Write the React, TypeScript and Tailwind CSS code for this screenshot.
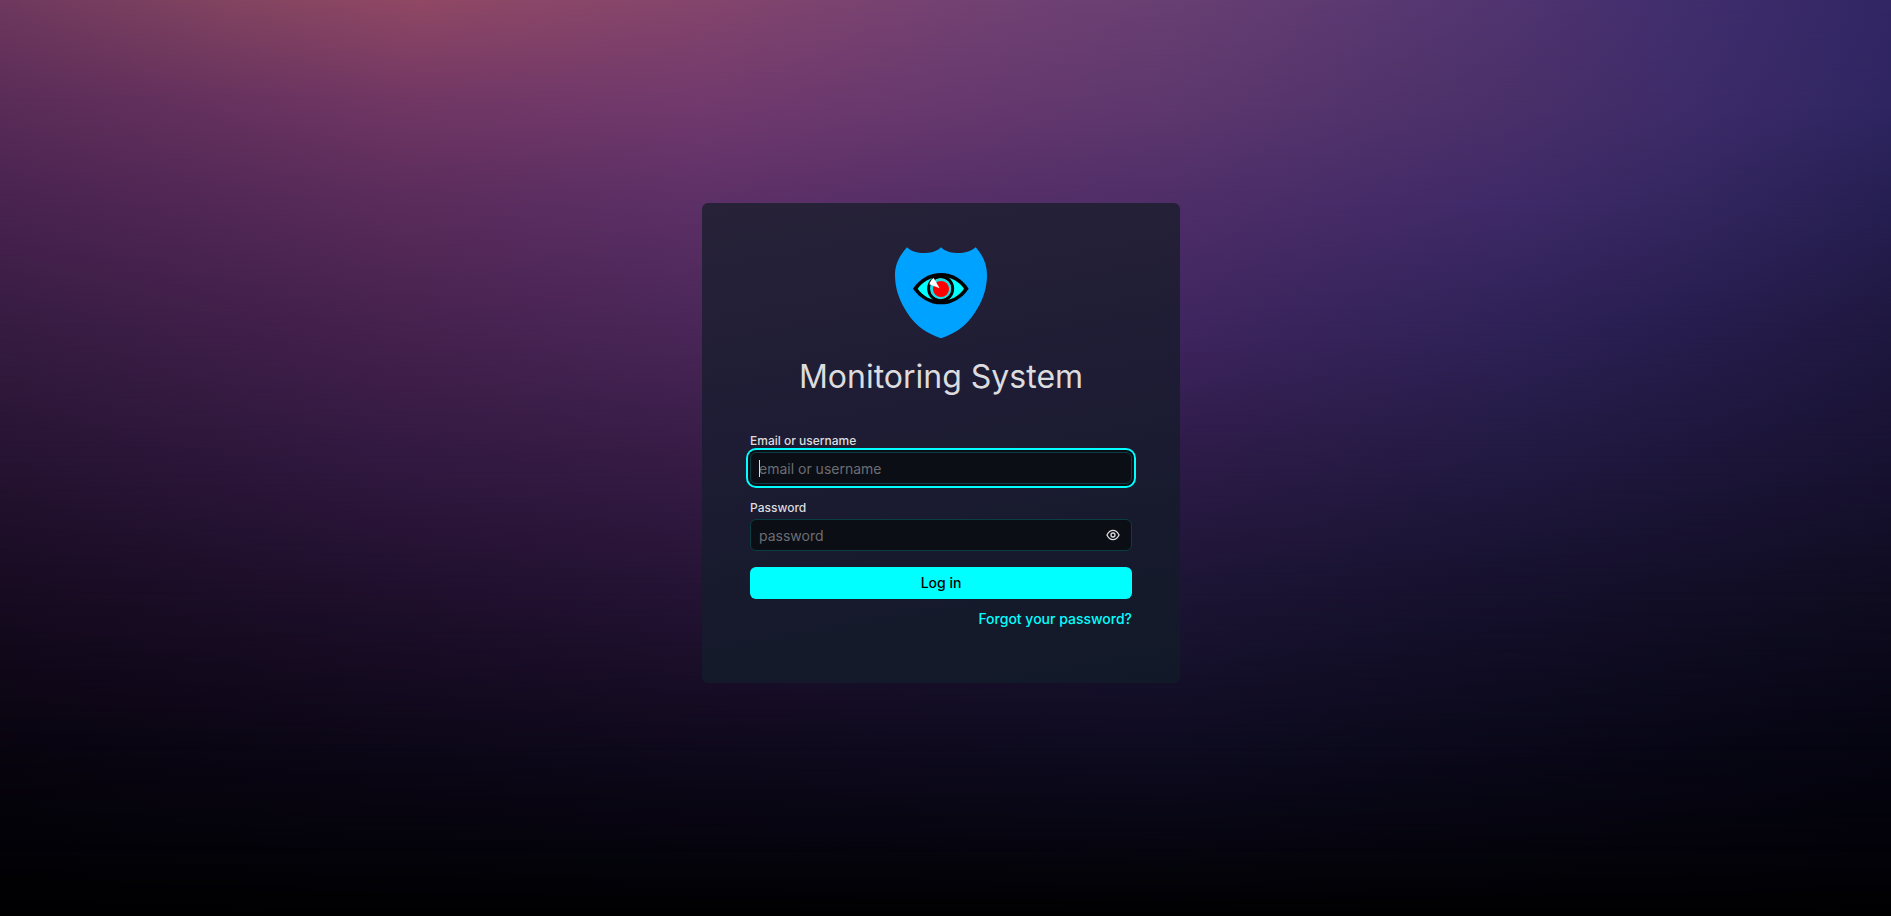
import React from 'react';

const backdropLayers = [
  'bg-[#010102]',
  'bg-[linear-gradient(to_right,#020207,#04030a_21%,#05040d_37%,#06050f_62%,#030209)] [mask-image:linear-gradient(to_bottom,black_93%,transparent_100%)]',
  'bg-[linear-gradient(to_right,#08040f,#0c0717_21%,#0f091c_37%,#0e0b20_62%,#0a0819_80%,#050410)] [mask-image:linear-gradient(to_bottom,black_82%,transparent_93%)]',
  'bg-[linear-gradient(to_right,#170b21,#1f0f2c_21%,#241334_37%,#1c1534_62%,#15102c_80%,#0f0c20)] [mask-image:linear-gradient(to_bottom,black_65%,transparent_82%)]',
  'bg-[linear-gradient(to_right,#261332,#321941_21%,#371c46_37%,#2e1b48_62%,#221a42_80%,#181232)] [mask-image:linear-gradient(to_bottom,black_50%,transparent_65%)]',
  'bg-[linear-gradient(to_right,#371c42,#47224f_21%,#4b2759_37%,#402660_62%,#2f2258_80%,#271d4e_90%,#1f1840)] [mask-image:linear-gradient(to_bottom,black_35%,transparent_50%)]',
  'bg-[linear-gradient(to_right,#492350,#5a2c5b_21%,#5d3067_37%,#4f2e68_62%,#3f2a68_80%,#33265f_90%,#261f52)] [mask-image:linear-gradient(to_bottom,black_22%,transparent_35%)]',
  'bg-[linear-gradient(to_right,#5a2c58,#713764_21%,#723a6d_37%,#68396e_50%,#5e386e_62%,#4a3069_80%,#3d2b69_90%,#2f2662)] [mask-image:linear-gradient(to_bottom,black_11%,transparent_22%)]',
  'bg-[linear-gradient(to_right,#6e385e,#824460_12%,#904864_22%,#84456c_37%,#744272_50%,#683f72_62%,#503470_80%,#3f2d6c_90%,#322664)] [mask-image:linear-gradient(to_bottom,black_0%,transparent_11%)]',
];

function ShieldLogo() {
  return (
    <svg className="size-[92px]" viewBox="44 36 276 276" role="img" aria-label="Monitoring System logo">
      <path
        d="M80 37C95 51 115 55 136 54C157 53 171 48 182 37C193 48 207 53 228 54C249 55 269 51 286 37C307 59 320 88 320 119C320 138 317 157 312 174C303 204 283 239 259 264C245 278 232 288 214 296C204 301 193 306 182 310C171 306 160 301 150 296C132 288 119 278 105 264C81 239 61 204 52 174C47 157 44 138 44 119C44 88 59 59 80 37Z"
        fill="#00a2ff"
      />
      <path
        d="M98 161C119 131 149 114 182 114C215 114 245 131 265 161C245 191 215 208 182 208C149 208 119 191 98 161Z"
        fill="#000"
      />
      <path
        d="M112 161C126 140 152 125 182 125C212 125 238 140 251 161C238 182 212 197 182 197C152 197 126 182 112 161Z"
        fill="#0ff"
      />
      <circle cx="181" cy="161" r="36" fill="none" stroke="#000" strokeWidth="9" />
      <circle cx="181" cy="161" r="31" fill="#20dce4" />
      <circle cx="182" cy="162" r="24" fill="#f00" />
      <path d="M160 129L178 160L147 148C149 140 153 134 160 129Z" fill="#fff" />
    </svg>
  );
}

function EyeIcon() {
  return (
    <svg className="size-4" viewBox="0 0 24 24" fill="currentColor" aria-hidden="true">
      <path d="M21.92,11.6C19.9,6.91,16.1,4,12,4S4.1,6.91,2.08,11.6a1,1,0,0,0,0,.8C4.1,17.09,7.9,20,12,20s7.9-2.91,9.92-7.6A1,1,0,0,0,21.92,11.6ZM12,18c-3.17,0-6.17-2.29-7.9-6C5.83,8.29,8.83,6,12,6s6.17,2.29,7.9,6C18.17,15.71,15.17,18,12,18ZM12,8a4,4,0,1,0,4,4A4,4,0,0,0,12,8Zm0,6a2,2,0,1,1,2-2A2,2,0,0,1,12,14Z" />
    </svg>
  );
}

const inputClass =
  'block h-8 w-full rounded-md border border-[#0a3e44] bg-[#0b0e15] px-2 text-sm text-[#d9d9dc] outline-none placeholder:text-[#6c6d73]';

export default function App() {
  const [visible, setVisible] = React.useState(false);
  return (
    <div className="grid min-h-screen bg-black font-['Inter',sans-serif] text-[#dcdcdf]">
      {backdropLayers.map((layer) => (
        <div key={layer} aria-hidden="true" className={`[grid-area:1/1] ${layer}`} />
      ))}
      <main className="z-10 flex items-center justify-center pr-[9px] pb-[30px] [grid-area:1/1]">
        <div className="w-full max-w-[478px] rounded-md bg-[linear-gradient(170deg,#272238,#1d1c34_45%,#171a2d_70%,#111928)] px-12 pt-11 pb-[54px]">
          <div className="flex flex-col items-center gap-5">
            <ShieldLogo />
            <h1 className="text-[32px] leading-9">Monitoring System</h1>
          </div>
          <form className="pt-[38px]" onSubmit={(e) => e.preventDefault()}>
            <label htmlFor="user" className="block pb-[3px] text-xs font-medium">
              Email or username
            </label>
            <div className="relative">
              <input
                id="user"
                type="text"
                placeholder="email or username"
                className={`${inputClass} caret-transparent shadow-[0_0_0_2px_#0b0e15,0_0_0_4px_#00ffff]`}
              />
              <span aria-hidden="true" className="absolute top-2 left-[9px] h-[17px] w-px bg-[#dcdcdf]" />
            </div>
            <label htmlFor="password" className="mt-4 block pb-[3px] text-xs font-medium">
              Password
            </label>
            <div className="relative">
              <input
                id="password"
                type={visible ? 'text' : 'password'}
                placeholder="password"
                className={`${inputClass} pr-10`}
              />
              <button
                type="button"
                aria-label="Show password"
                onClick={() => setVisible(!visible)}
                className="absolute inset-y-0 right-[11px] flex items-center"
              >
                <EyeIcon />
              </button>
            </div>
            <button
              type="submit"
              className="mt-4 flex h-8 w-full items-center justify-center rounded-md bg-[#00ffff] text-sm font-medium text-black"
            >
              Log in
            </button>
            <div className="flex justify-end pt-2.5">
              <a href="#forgot" className="text-sm font-medium text-[#00ffff]">
                Forgot your password?
              </a>
            </div>
          </form>
        </div>
      </main>
    </div>
  );
}
